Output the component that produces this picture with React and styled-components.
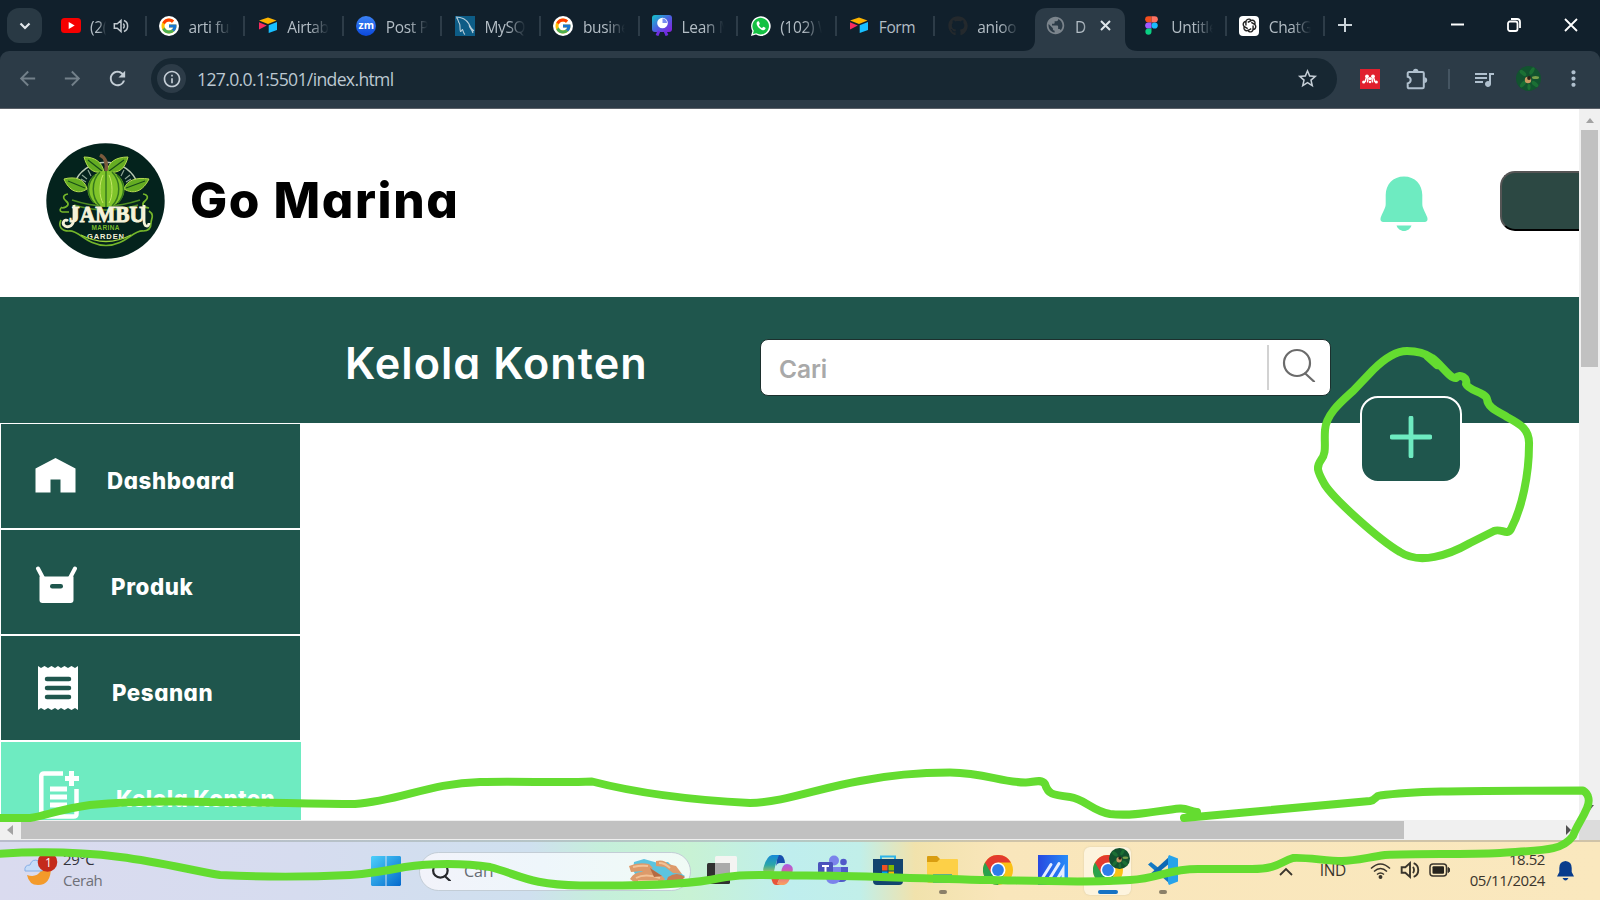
import React from "react";
import styled, { createGlobalStyle, css } from "styled-components";
import { FcGoogle } from "react-icons/fc";
import { FaGithub, FaWhatsapp } from "react-icons/fa";
import { RiOpenaiLine } from "react-icons/ri";
import {
  MdArrowBack, MdArrowForward, MdRefresh, MdInfoOutline, MdStarBorder,
  MdQueueMusic, MdMoreVert, MdPublic,
} from "react-icons/md";

const GlobalStyle = createGlobalStyle`
  * { box-sizing: border-box; }
  body { margin: 0; overflow: hidden; }
  svg { display: block; flex: none; }
`;

const ui = css`font-family: "Open Sans", "Noto Sans", sans-serif;`;
const brandFont = css`
  font-family: Inter, "Liberation Sans", sans-serif;
  font-feature-settings: "cv11", "ss03";
`;

const Screen = styled.div`
  position: relative;
  width: 1600px;
  height: 900px;
  display: flex;
  flex-direction: column;
  overflow: hidden;
  background: #fff;
  ${ui}
`;

/* ---------- browser chrome ---------- */
const TabStrip = styled.div`
  height: 51px;
  flex: none;
  display: flex;
  align-items: stretch;
  background: #11202c;
  padding-left: 7px;
`;
const TabMenu = styled.div`
  width: 35px;
  height: 35px;
  margin: 8px 6px 0 0;
  border-radius: 12px;
  background: #293944;
  display: flex;
  align-items: center;
  justify-content: center;
`;
const Tab = styled.div`
  position: relative;
  width: ${(p) => p.$width || 98.6}px;
  flex: none;
  height: 51px;
  display: flex;
  align-items: center;
  padding-left: ${(p) => (p.$active ? 12 : 12.5)}px;
  gap: ${(p) => (p.$active ? 9 : 9.5)}px;
  color: #b3bdc5;
`;
const ActiveShape = styled.svg`
  position: absolute;
  left: -11px;
  bottom: 0;
`;
const TabIcon = styled.div`
  position: relative;
  width: 20px;
  display: flex;
  justify-content: center;
`;
const TabText = styled.div`
  position: relative;
  width: ${(p) => p.$w || 42}px;
  margin-top: 2px;
  overflow: hidden;
  white-space: nowrap;
  font-size: 15.5px;
  letter-spacing: -0.35px;
  mask-image: ${(p) => (p.$full ? "none" : "linear-gradient(90deg, #000 55%, transparent 100%)")};
`;
const TabDivider = styled.div`
  width: 2px;
  height: 20px;
  margin-left: auto;
  background: #2d3c48;
`;
const TabButton = styled.div`
  position: relative;
  margin-left: ${(p) => p.$ml || 0}px;
  display: flex;
`;
const WindowButtons = styled.div`
  margin-left: auto;
  display: flex;
  align-items: center;
  gap: 43px;
  padding-right: 22px;
  height: 50px;
`;
const ToolbarBack = styled.div`
  background: #11202c;
  flex: none;
`;
const Toolbar = styled.div`
  height: 58px;
  display: flex;
  align-items: center;
  background: #2c3b47;
  border-radius: 9px 9px 0 0;
  border-bottom: 1px solid #5b6068;
  padding: 0 0 2px 16px;
`;
const NavButtons = styled.div`
  display: flex;
  gap: 22px;
  color: #73808a;
  width: 135px;
  flex: none;
`;
const AddressBar = styled.div`
  width: 1186px;
  flex: none;
  height: 42px;
  border-radius: 21px;
  background: #172732;
  display: flex;
  align-items: center;
  padding: 0 18px 0 6px;
  color: #c5ced6;
`;
const InfoBadge = styled.div`
  width: 29px;
  height: 29px;
  border-radius: 50%;
  background: #2c3b47;
  display: flex;
  align-items: center;
  justify-content: center;
  margin-right: 11px;
`;
const Url = styled.div`
  flex: 1;
  font-size: 17.6px;
  letter-spacing: -0.66px;
  color: #bcc8d1;
`;
const Extensions = styled.div`
  display: flex;
  align-items: center;
  flex: none;
  margin-left: 23px;
  color: #b0c0ce;
`;
const ExtensionDivider = styled.div`
  width: 2px;
  height: 20px;
  margin: 0 22px 0 20px;
  background: #455562;
`;

/* ---------- page ---------- */
const Viewport = styled.div`
  height: 711px;
  flex: none;
  display: flex;
`;
const Page = styled.div`
  position: relative;
  width: 1579px;
  height: 711px;
  overflow: hidden;
`;
const Header = styled.header`
  height: 188px;
  display: flex;
  align-items: center;
  padding: 0 0 4px 46px;
`;
const Brand = styled.h1`
  ${brandFont}
  margin: 0 0 2px 25px;
  width: 1190px;
  flex: none;
  white-space: nowrap;
  font-size: 49.5px;
  line-height: 60px;
  font-weight: 800;
  letter-spacing: 1.6px;
  color: #000;
`;
const HeaderButton = styled.div`
  width: 140px;
  height: 60px;
  flex: none;
  margin: 0 0 0 72px;
  background: #2c4843;
  border: 2px solid;
  border-color: #555 #000 #000 #555;
  border-radius: 15px;
`;
const Band = styled.div`
  height: 126px;
  background: #1f564d;
  display: flex;
  align-items: center;
  padding-left: 345px;
`;
const BandTitle = styled.h2`
  ${brandFont}
  margin: 5px 0 0;
  width: 415px;
  font-size: 43.2px;
  font-weight: 600;
  letter-spacing: 1.05px;
  white-space: nowrap;
  color: #fff;
`;
const SearchBox = styled.div`
  width: 571px;
  height: 57px;
  margin-top: 15px;
  background: #fff;
  border: 1px solid #1c302e;
  border-radius: 8px;
  display: flex;
  align-items: center;
  padding-left: 18px;
`;
const SearchHint = styled.span`
  font-family: Inter, sans-serif;
  font-size: 24.5px;
  font-weight: 600;
  letter-spacing: -0.1px;
  color: #a9a9a9;
  padding-top: 3px;
  width: 488px;
`;
const SearchRule = styled.div`
  width: 2px;
  height: 45px;
  background: #d2d2d2;
  margin-right: 13px;
`;
const SearchIcon = styled.div`
  padding-bottom: 5px;
`;
const AddButton = styled.div`
  position: absolute;
  left: 1360px;
  top: 287px;
  width: 102px;
  height: 87px;
  border: 2.5px solid #fff;
  border-radius: 18px;
  background: #1f564d;
  display: flex;
  align-items: center;
  justify-content: center;
  padding-bottom: 5px;
`;
const Sidebar = styled.nav`
  display: flex;
  flex-direction: column;
  gap: 2px;
  width: 301px;
  padding: 1px 0 0 1px;
`;
const SideItem = styled.div`
  ${brandFont}
  height: 104.1px;
  flex: none;
  width: ${(p) => (p.$active ? 300 : 299)}px;
  background: ${(p) => (p.$active ? "#6eebc1" : "#1f564d")};
  display: flex;
  align-items: center;
  color: #fff;
  font-size: 22.3px;
  font-weight: 800;
  letter-spacing: ${(p) => p.$ls || 0}px;
  padding-left: 34px;
`;
const SideIcon = styled.div`
  width: ${(p) => p.$w}px;
  margin-top: ${(p) => p.$mt || 0}px;
  padding-left: ${(p) => p.$pl || 0}px;
`;
const SideLabel = styled.span`
  margin-top: 8px;
  white-space: nowrap;
`;

const VScroll = styled.div`
  width: 21px;
  height: 711px;
  background: #f0f0f0;
  display: flex;
  flex-direction: column;
  align-items: center;
  padding: 6px 0 7px;
`;
const VThumb = styled.div`
  width: 17px;
  height: 237px;
  margin: 5px 0 auto;
  background: #c1c1c1;
`;
const HScroll = styled.div`
  height: 20px;
  flex: none;
  display: flex;
  align-items: center;
  background: #f0f0f0;
  padding-left: 7px;
`;
const HThumb = styled.div`
  width: 1383px;
  height: 18px;
  margin: 0 auto 0 6px;
  background: #c1c1c1;
`;
const ScrollCorner = styled.div`
  width: 21px;
  height: 20px;
  margin-left: 5px;
  background: #dcdcdc;
`;

/* ---------- taskbar ---------- */
const Taskbar = styled.footer`
  height: 60px;
  flex: none;
  display: flex;
  align-items: center;
  border-top: 2px solid #b9babd;
  border-image: linear-gradient(90deg, #b9bccb, #b4c8c4 50%, #cfc3a8 62%) 1;
  background: linear-gradient(90deg, #dadbef 0, #d6dcef 300px, #cfe0ef 530px, #c5efdb 600px, #c8f2d4 690px, #bfeeee 790px, #c1efe9 860px, #f1e2ac 915px, #f9e6bb 1000px, #fae8be 100%);
`;
const Weather = styled.div`
  display: flex;
  width: 371px;
  padding-left: 24px;
  gap: 5px;
`;
const TwoLines = styled.div`
  margin-top: -3px;
  font-size: 15px;
  line-height: 20.5px;
  letter-spacing: -0.43px;
  color: ${(p) => p.$c || "#33343c"};
  text-align: ${(p) => p.$align || "left"};
  span { display: block; }
  span + span { color: ${(p) => p.$c2 || p.$c}; }
`;
const TaskSearch = styled.div`
  width: 272px;
  height: 39px;
  margin-left: 18px;
  border-radius: 20px;
  border: 1px solid #c3cdd6;
  background: linear-gradient(90deg, #f2f3fa, #eef6fb 45%, #f0fbf5);
  display: flex;
  align-items: center;
  padding: 0 4px 0 12px;
  gap: 13px;
  color: #666b73;
  font-size: 16px;
`;
const TaskSearchText = styled.span`
  flex: 1;
`;
const Apps = styled.div`
  display: flex;
  align-items: center;
  margin-left: 8px;
`;
const AppSlot = styled.div`
  width: ${(p) => p.$w || 55}px;
  height: 58px;
  display: flex;
  flex-direction: column;
  align-items: center;
  padding-top: 13px;
`;
const AppTile = styled.div`
  width: 47px;
  height: 48px;
  margin: -8px 0 -5px;
  padding-top: 8px;
  border-radius: 6px;
  background: #fdf4de;
  box-shadow: 0 0 2px #d8cba8;
  display: flex;
  flex-direction: column;
  align-items: center;
`;
const Running = styled.div`
  width: ${(p) => (p.$on ? 20 : 8)}px;
  height: 4px;
  flex: none;
  margin-top: 5px;
  border-radius: 2px;
  background: ${(p) => (p.$on ? "#1673c4" : "#8b8068")};
`;
const Tray = styled.div`
  margin-left: auto;
  display: flex;
  align-items: center;
  padding-right: 26px;
  color: #3a352c;
  font-size: 15.5px;
`;
const Lang = styled.span`
  margin: -2px 23px 0 27px;
  letter-spacing: -0.3px;
  width: 27px;
`;
const TrayIcons = styled.div`
  display: flex;
  align-items: center;
  gap: 9px;
  margin: -2px 20px 0 0;
`;
const Annotation = styled.svg`
  position: absolute;
  left: 0;
  top: 0;
  pointer-events: none;
`;

/* ---------- icons ---------- */
const YouTube = () => (
  <svg width="20" height="15" viewBox="0 0 20 15"><rect width="20" height="15" rx="3.5" fill="#f60000" /><path d="M7.7 4v7l6-3.5z" fill="#fff" /></svg>
);
const GoogleBadge = styled.div`
  width: 20px;
  height: 20px;
  border-radius: 50%;
  background: #fff;
  display: flex;
  align-items: center;
  justify-content: center;
`;
const Google = () => <GoogleBadge><FcGoogle size={18} /></GoogleBadge>;
const Airtable = () => (
  <svg width="20" height="17" viewBox="0 0 20 17">
    <path d="M1 3.6 10 .5l8.500 3.100L10 7z" fill="#fcb400" />
    <path d="M10.700 8.300 19 5v8L10.700 16z" fill="#18bfff" />
    <path d="M1 5.200 8.800 8.500 1 12.500z" fill="#f82b60" />
  </svg>
);
const ZoomBadge = styled.div`
  width: 20px;
  height: 20px;
  border-radius: 50%;
  background: linear-gradient(#3b82f6, #0b48dc);
  color: #fff;
  font: 700 10.5px/18px "Open Sans", sans-serif;
  text-align: center;
`;
const MySql = () => (
  <svg width="20" height="20" viewBox="0 0 20 20">
    <rect width="20" height="20" fill="#0d5c86" />
    <path d="M1 1c6 0 10 2 13 7 1 2 1 4 5 7M1.500 1.500c2 2 1.500 4 3 6 1 2 0 5 1 8 1 0 1.500-2 2-2 1 2 1 4 2.500 5M14 8c0 4 3 5 4 9" fill="none" stroke="#b7cdd9" strokeWidth="1.100" />
  </svg>
);
const Lean = () => (
  <svg width="20" height="21" viewBox="0 0 20 21">
    <defs><linearGradient id="lean" x1="0" y1="0" x2="1" y2="1"><stop offset="0" stopColor="#12c8c8" /><stop offset=".5" stopColor="#4a62e0" /><stop offset="1" stopColor="#8a1ce0" /></linearGradient></defs>
    <rect width="20" height="17" rx="3" fill="url(#lean)" />
    <path d="m7 16-2 4.500M13 16l2 4.500" stroke="#6f2ee0" strokeWidth="3" />
    <circle cx="10.500" cy="8" r="5.300" fill="#fff" /><path d="M10.500 8V3.500A4.500 4.500 0 0 1 15 8z" fill="#7a8df0" />
  </svg>
);
const WhatsApp = () => (
  <svg width="20" height="20" viewBox="0 0 20 20">
    <path d="M0 20 1.400 15A9.800 9.800 0 1 1 5 18.600z" fill="#fff" />
    <path d="M1.900 18.100 2.800 14.800A8.300 8.300 0 1 1 5.300 17.200z" fill="#14c143" />
    <path d="M7.200 5.200c-.6 0-1.600.7-1.600 2.300 0 2.600 3.600 6.300 6.300 6.700 1.600.2 2.700-.9 2.700-2.200 0-.4-2-1.400-2.300-1.300-.4.100-.9 1.200-1.300 1.200-.8-.1-2.700-1.700-3-2.700 0-.4.800-.9.800-1.400 0-.4-.8-2.500-1.100-2.600z" fill="#fff" />
  </svg>
);
const GithubBox = styled.div`color: #24292d;`;
const GlobeBox = styled.div`color: #7b848c;`;
const Figma = () => (
  <svg width="13" height="19" viewBox="0 0 14 20">
    <path d="M7 0H3.500a3.300 3.300 0 0 0 0 6.660H7z" fill="#f24e1e" /><path d="M7 0h3.500a3.300 3.300 0 0 1 0 6.660H7z" fill="#ff7262" />
    <path d="M7 6.660H3.500a3.300 3.300 0 0 0 0 6.660H7z" fill="#a259ff" /><circle cx="10.400" cy="10" r="3.330" fill="#1abcfe" />
    <path d="M7 13.320H3.500A3.300 3.300 0 1 0 7 16.700z" fill="#0acf83" />
  </svg>
);
const GptBadge = styled.div`
  width: 20px;
  height: 20px;
  border-radius: 4px;
  background: #fff;
  color: #222;
  display: flex;
  align-items: center;
  justify-content: center;
`;
const Speaker = ({ size = 16, color = "#c0c8ce" }) => (
  <svg width={size} height={size} viewBox="0 0 18 18" fill="none" stroke={color} strokeWidth="1.700">
    <path d="M1.500 6.500h3.300L9 2.800v12.400L4.800 11.500H1.500zM11.500 6.300c1.500 1 1.500 4.400 0 5.400M12.300 2.800c5.500 2 5.500 10.400 0 12.400" />
  </svg>
);
const Mendeley = () => (
  <svg width="20" height="20" viewBox="0 0 20 20">
    <rect width="20" height="20" fill="#e0202e" />
    <g fill="#fff"><circle cx="7" cy="7.300" r="1.900" /><circle cx="13" cy="7.300" r="1.900" /><circle cx="10" cy="9.600" r="1.600" /><circle cx="3.700" cy="13" r="1.600" /><circle cx="10" cy="13" r="1.200" /><circle cx="16.300" cy="13" r="1.600" /></g>
    <path d="M5 12.800C6 11 5.500 9 7 8M8 9l-.5 4.500M15 12.800C14 11 14.500 9 13 8M12 9l.5 4.500" stroke="#fff" strokeWidth="1.500" fill="none" />
  </svg>
);
const Puzzle = () => (
  <svg width="22" height="22" viewBox="0 0 22 22">
    <path d="M3 4h13.500a1.300 1.300 0 0 1 1.300 1.300V19a1.300 1.300 0 0 1-1.300 1.300H3A1.300 1.300 0 0 1 1.700 19v-3.600c4-1 4-5.600 0-6.600V5.300A1.300 1.300 0 0 1 3 4z" fill="none" stroke="currentColor" strokeWidth="2" />
    <path d="M7 3.500a2.700 2.700 0 0 1 5.400 0zM18.300 9.200a2.900 2.900 0 0 1 0 5.800z" fill="currentColor" />
  </svg>
);
const Avatar = ({ size }) => (
  <svg width={size} height={size} viewBox="0 0 25 25">
    <circle cx="12.500" cy="12.500" r="12.500" fill="#12532f" />
    <g fill="#1f7a36" opacity=".75"><ellipse cx="7" cy="7" rx="4" ry="2" transform="rotate(40 7 7)" /><ellipse cx="16" cy="5" rx="4" ry="1.800" transform="rotate(-60 16 5)" /><ellipse cx="19" cy="18" rx="4" ry="2" transform="rotate(40 19 18)" /><ellipse cx="7" cy="18" rx="4" ry="2" transform="rotate(-50 7 18)" /><ellipse cx="13" cy="21" rx="1.600" ry="3" /></g>
    <ellipse cx="19.500" cy="11.500" rx="3.500" ry="1.500" fill="#79a14a" /><circle cx="12" cy="14" r="3.200" fill="#c99b62" /><circle cx="13" cy="12" r="1.900" fill="#2a1f18" />
  </svg>
);
const Magnifier = ({ size, stroke, color }) => (
  <svg width={size} height={size} viewBox="0 0 34 34" fill="none" stroke={color} strokeWidth={stroke} strokeLinecap="round">
    <circle cx="15" cy="15" r="13" /><path d="m23.300 25.500 8.700 8" />
  </svg>
);
const BellBox = styled.div`
  padding-top: 5px;
`;
const Bell = () => (
  <svg width="48" height="56" viewBox="0 0 48 56" fill="#6eebc1">
    <path d="M24 .5C13 .5 5.700 8.500 5.700 19v9c0 4-2.500 7-5 13.500C0 43.800.7 46 3 46h42c2.300 0 3-2.200 2.300-4.500C44.800 35 42.300 32 42.300 28v-9C42.300 8.500 35 .5 24 .5z" />
    <path d="M16.500 49.500h15c-1 3-4 5.500-7.500 5.500s-6.500-2.500-7.500-5.500z" />
  </svg>
);
const Logo = () => (
  <svg width="119" height="116" viewBox="0 0 119 116">
    <ellipse cx="59.500" cy="58" rx="59.200" ry="57.800" fill="#04231d" />
    <path d="M28 42a33 30 0 0 1 64 0" fill="none" stroke="#b9c9b4" strokeWidth="1.500" />
    <path d="M36 32l5 4M35 36l5 3M42 27l3 6M84 32l-5 4M85 36l-5 3M78 27l-3 6" stroke="#8ba494" strokeWidth="1.200" />
    <path d="M22 51c-6 1-5 5-2 7 4 3 2 6-4 7M97 51c6 1 5 5 2 7-4 3-2 6 4 7M16 69h7M16 64c-2 2-3 4 0 5M103 68c6 4 2 8 2 12 0 5-3 8-8 8-10-1-18 14.500-37 14.500S33 87 23 88c-8 0-11-5-8-11" fill="none" stroke="#74b62a" strokeWidth="1.700" />
    <path d="M26 57q18 6 34 6t34-6M28 62q16 5 32 5t32-5" fill="none" stroke="#4e8d22" strokeWidth="1.500" />
    <g fill="#65ad22" stroke="#b3dc50" strokeWidth="1">
      <path d="M58 29C45 31 41 24 38 14c11 0 18 5 20 15z" /><path d="M61 29c1-10 9-15 21-15-3 11-8 17-21 15z" />
      <path d="M41 46c-9 6-18 2-23-10 11-3 21 0 23 10z" /><path d="M78 46c3-9 12-12 25-10-6 12-15 16-25 10z" />
    </g>
    <path d="M42 17l14 11M78 17 63 28M22 38l17 7M99 38l-19 7" stroke="#174d18" strokeWidth="1.200" />
    <path d="M60 28c1-8 0-13-6-16" fill="none" stroke="#7b5a3d" strokeWidth="3.500" />
    <ellipse cx="60" cy="46" rx="18.500" ry="18" fill="#80c42a" />
    <path d="M60 28v36M54 29c-9 9-9 25 0 34M66 29c9 9 9 25 0 34M49 32c-9 9-8 20-1 28M71 32c9 9 8 20 1 28" fill="none" stroke="#35781c" strokeWidth="1.500" />
    <path d="M57 32c-4 8-4 22 0 28M63 32c4 8 4 22 0 28" fill="none" stroke="#c5e866" strokeWidth="1" />
    <text x="61" y="79" textAnchor="middle" textLength="76" lengthAdjust="spacingAndGlyphs" fontFamily="Liberation Serif, serif" fontWeight="700" fontSize="24" fill="#f5f2d8" stroke="#f5f2d8" strokeWidth="1">JAMBU</text>
    <path d="M28 62v12c0 9-5 11-9 9-4-3 0-8 3-5M98 62v15c0 8 5 7 5 3" fill="none" stroke="#f5f2d8" strokeWidth="2.800" />
    <text x="59.500" y="87" textAnchor="middle" textLength="28" fontFamily="Liberation Sans, sans-serif" fontWeight="700" fontSize="6.500" fill="#78b92b">MARINA</text>
    <text x="59.500" y="95.500" textAnchor="middle" textLength="37" fontFamily="Liberation Sans, sans-serif" fontWeight="700" fontSize="7.500" fill="#f5f2d8">GARDEN</text>
    <path d="M35 92q25 13 50 0" fill="none" stroke="#9bd23a" strokeWidth="1.300" />
  </svg>
);
const Home = () => (
  <svg width="41" height="35" viewBox="0 0 41 35"><path d="M20.500 0 40.500 10.500V34.500H25.500V21.500H15.500V34.500H.5V10.500z" fill="#fff" /></svg>
);
const Box = () => (
  <svg width="43" height="37" viewBox="0 0 43 37"><path d="M3 2.500 8 12M40 2.500 35 12" stroke="#fff" strokeWidth="4" strokeLinecap="round" /><path d="M4.500 10.500h34V34q0 3-3 3h-28q-3 0-3-3z" fill="#fff" /><rect x="15" y="18" width="13" height="4.500" rx="2.200" fill="#1f564d" /></svg>
);
const Receipt = () => (
  <svg width="40" height="44" viewBox="0 0 40 44">
    <path d="M0 0l3 2 3.500-2L10 2l3.500-2L17 2l3-2 3 2 3.500-2L30 2l3.500-2L37 2l3-2v44l-3-2-3.500 2L30 42l-3.500 2L23 42l-3 2-3-2-3.500 2L10 42l-3.500 2L3 42l-3 2z" fill="#fff" />
    <path d="M9 13h22M9 22h22M9 31h22" stroke="#1f564d" strokeWidth="4.500" strokeLinecap="round" />
  </svg>
);
const PagePlus = () => (
  <svg width="40" height="48" viewBox="0 0 40 48" fill="none" stroke="#fff" strokeWidth="4.500">
    <path d="M24 2.500H5Q2.300 2.500 2.300 5v38q0 2.500 2.700 2.500h29.500q3 0 3-2.500V18" /><path d="M32.500 0v15M26 7.500h14M11 18h17M11 26h17M11 34h17" strokeWidth="5" />
  </svg>
);
const Arrow = ({ d, c = "#a3a3a3" }) => <svg width="8" height="10" viewBox="0 0 8 10"><path d={d} fill={c} /></svg>;
const Moon = () => (
  <svg width="34" height="38" viewBox="0 0 34 38">
    <path d="M20 5q6 2 7 10Q27 33 14 33 5 33 3 23q16 5 17-18z" fill="#f39a2b" />
    <path d="M1 19q-1-6 5-6 2-7 9-4 5 2 4 9 0 1-2 1z" fill="#c6dcf8" stroke="#86afe6" />
    <circle cx="23.500" cy="10" r="9.800" fill="#c42b1c" />
    <text x="24.500" y="14.500" textAnchor="middle" fill="#fff" fontSize="12" fontFamily="Open Sans, sans-serif">1</text>
  </svg>
);
const Windows = () => (
  <svg width="30" height="30" viewBox="0 0 30 30"><defs><linearGradient id="win" x1="0" y1="0" x2="1" y2="1"><stop stopColor="#4dd0fb" /><stop offset="1" stopColor="#0469cc" /></linearGradient></defs><path d="M1 0h13.500v14.500H0V1zM15.500 0H29l1 1v13.500H15.500zM0 15.500h14.500V30H1l-1-1zM15.500 15.500H30V29l-1 1H15.500z" fill="url(#win)" /></svg>
);
const Canyon = () => (
  <svg width="58" height="26" viewBox="0 0 58 26">
    <path d="M6 4 16 1l14 4 10-1 9 9 8 5-8 6-20-2-20-2-4-8z" fill="#5cc4df" />
    <path d="M1 8q9-4 20-2l4 4-10 3-12 1zM28 3q8-2 12 3l8 2 6 8-9-1-8-6-9-1zM2 21q3-6 11-7l9-4 12 8 3 3-3 3H6z" fill="#dd9a6a" />
    <path d="M5 9q8-2 15-1M8 20q9-5 24 0M31 5q6 0 11 5M10 23h20" stroke="#f2c296" strokeWidth="2" fill="none" /><path d="M40 19q9-6 17 0l-5 5H38z" fill="#c97c51" />
    <path d="M22 10l12 8-8 1z" fill="#b46a43" />
  </svg>
);
const TaskView = () => (
  <svg width="30" height="30" viewBox="0 0 30 30"><rect x="8" y="1" width="22" height="20" rx="1.500" fill="#f4f4f2" /><rect y="8" width="23" height="21" rx="1.500" fill="#303030" /><path d="M8 8h15v13H8z" fill="#aaa" /></svg>
);
const Copilot = () => (
  <svg width="30" height="30" viewBox="0 0 30 30">
    <defs>
      <linearGradient id="cpa" x1="0" y1="0" x2="0" y2="1"><stop stopColor="#1689d8" /><stop offset=".5" stopColor="#2ca6a8" /><stop offset="1" stopColor="#c9cf3c" /></linearGradient>
      <linearGradient id="cpb" x1="0" y1="0" x2="0" y2="1"><stop stopColor="#a85be8" /><stop offset=".5" stopColor="#e2608f" /><stop offset="1" stopColor="#fba45c" /></linearGradient>
    </defs>
    <path d="M9 0h8q-3 3-5 12-1 8-6 8-8-1-5-9Q4 1 9 0z" fill="url(#cpa)" />
    <path d="M13 0h4q4 0 5 8h-5q-3 0-4 3 0-6 3-11z" fill="#174fae" />
    <path d="M21 30h-8q3-3 5-12 1-9 6-9 8 1 5 9-3 11-8 12z" fill="url(#cpb)" />
    <path d="M17 30h-4q-4 0-5-9h5q3 0 4-3 0 6-3 11z" fill="#e8543a" />
  </svg>
);
const Teams = () => (
  <svg width="30" height="30" viewBox="0 0 30 30"><circle cx="16" cy="5.500" r="5" fill="#7b83eb" /><circle cx="25.500" cy="7" r="3.300" fill="#5059c9" /><path d="M20 12h10v9q-1 6-6 6h-4z" fill="#5059c9" /><path d="M8 12h15v10q-1 7-8 7t-7-7z" fill="#7b83eb" /><rect y="7" width="15" height="15" rx="1.500" fill="#4b53bc" /><path d="M4 11h7M7.500 11v8" stroke="#fff" strokeWidth="2" /></svg>
);
const Store = () => (
  <svg width="30" height="30" viewBox="0 0 30 30"><path d="M8 6V1.500h14V6" fill="none" stroke="#2fb4e8" strokeWidth="2" /><path d="M0 4h30v22q0 4-4 4H4q-4 0-4-4z" fill="#12446f" /><path d="M9 10h5.500v5.500H9z" fill="#f25022" /><path d="M15.500 10H21v5.500h-5.500z" fill="#7fba00" /><path d="M9 16.500h5.500V22H9z" fill="#00a4ef" /><path d="M15.500 16.500H21V22h-5.500z" fill="#ffb900" /></svg>
);
const Folder = () => (
  <svg width="31" height="30" viewBox="0 0 31 30"><path d="M0 2q0-1 1-1h9l3 3v6H0z" fill="#d99d10" /><path d="M0 7h10l3-3h17q1 0 1 1v21q0 2-2 2H2q-2 0-2-2z" fill="#fdd047" /><path d="M6 19h19v9H6z" fill="#5fae8e" /></svg>
);
const Chrome = () => (
  <svg width="30" height="30" viewBox="0 0 30 30"><circle cx="15" cy="15" r="15" fill="#fbc116" /><path d="M2 7.500A15 15 0 0 0 15 30l6.500-11.300L15 15z" fill="#2ba24c" /><path d="M2 7.500 8.500 18.700 15 7.500h13A15 15 0 0 0 2 7.500z" fill="#e33b2e" /><circle cx="15" cy="15" r="7.500" fill="#fff" /><circle cx="15" cy="15" r="5.900" fill="#2f7de9" /></svg>
);
const MyAsus = () => (
  <svg width="30" height="30" viewBox="0 0 30 30"><defs><linearGradient id="asus"><stop stopColor="#2749e0" /><stop offset="1" stopColor="#268cf8" /></linearGradient></defs><rect width="30" height="30" fill="url(#asus)" /><path d="M4.500 23 13 9.500M12 23 21 8.500M20 23l5-8.500V24" fill="none" stroke="#e4edff" strokeWidth="3" strokeLinecap="round" /></svg>
);
const ChromeBadge = styled.div`
  position: relative;
  display: flex;
`;
const BadgeAvatar = styled.div`
  position: absolute;
  left: 16px;
  top: -7px;
`;
const Code = () => (
  <svg width="30" height="30" viewBox="0 0 30 30"><path d="M0 9.500 3 7l19 15v7z" fill="#1379c4" /><path d="M0 21l3 2.500L22 8V1z" fill="#0c68b4" /><path d="M21 0l9 3.500v23L21 30l-1-2V2z" fill="#27a3ea" /></svg>
);
const Wifi = () => (
  <svg width="21" height="17" viewBox="0 0 21 17" fill="none" stroke="#3a352c" strokeWidth="1.500"><path d="M1 6.500q9.500-9 19 0M4 9.500q6.500-6 13 0M7 12.500q3.500-3 7 0" /><circle cx="10.500" cy="15" r="1.200" fill="#3a352c" /></svg>
);
const Battery = () => (
  <svg width="21" height="14" viewBox="0 0 21 14"><rect x="1" y="1" width="16.500" height="12" rx="3" fill="none" stroke="#3a352c" strokeWidth="1.500" /><rect x="3.500" y="3.300" width="11.500" height="7.400" rx="1" fill="#26231d" /><path d="M19 4.500v5l1.500-1v-3z" fill="#3a352c" stroke="#3a352c" /></svg>
);
const TrayBell = () => (
  <svg width="17" height="20" viewBox="0 0 17 20" fill="#093c8c"><path d="M8.500 0Q2.300.5 2.300 7v4L0 15.500h17L14.700 11V7Q14.700.5 8.500 0zM5.500 17h6q-3 5-6 0z" /></svg>
);

const tabs = [
  { icon: <YouTube />, label: "(2(", w: 16, audio: true },
  { icon: <Google />, label: "arti fun" },
  { icon: <Airtable />, label: "Airtab" },
  { icon: <ZoomBadge>zm</ZoomBadge>, label: "Post Pr" },
  { icon: <MySql />, label: "MySQ" },
  { icon: <Google />, label: "busine" },
  { icon: <Lean />, label: "Lean M" },
  { icon: <WhatsApp />, label: "(102) W" },
  { icon: <Airtable />, label: "Form", full: true },
  { icon: <GithubBox><FaGithub size={20} /></GithubBox>, label: "anioo", noDivider: true },
  { icon: <GlobeBox><MdPublic size={21} /></GlobeBox>, label: "D", active: true, w: 15, noDivider: true, width: 95.4 },
  { icon: <Figma />, label: "Untitle", width: 97.4 },
  { icon: <GptBadge><RiOpenaiLine size={17} /></GptBadge>, label: "ChatG", width: 98 },
];

const menu = [
  { icon: <Home />, label: "Dashboard", w: 72, mt: -1, ls: 0.6 },
  { icon: <Box />, label: "Produk", w: 76, mt: 4, ls: 0.6 },
  { icon: <Receipt />, label: "Pesanan", w: 77, pl: 3, ls: 0.55 },
  { icon: <PagePlus />, label: "Kelola Konten", w: 81, mt: 1, pl: 4, ls: 0.4, active: true },
];

export default function App() {
  return (
    <Screen>
      <GlobalStyle />
      <TabStrip>
        <TabMenu>
          <svg width="12" height="8" viewBox="0 0 12 8"><path d="m1.500 1.500 4.500 4.500 4.500-4.500" fill="none" stroke="#e3e8ec" strokeWidth="2.200" /></svg>
        </TabMenu>
        {tabs.map((t, i) => (
          <Tab key={i} $active={t.active} $width={t.width}>
            {t.active && (
              <ActiveShape width="116" height="43" viewBox="0 0 116 43">
                <path d="M0 43q12 0 12-12V12Q12 0 24 0h66q12 0 12 12v19q0 12 13 12z" fill="#2c3b47" />
              </ActiveShape>
            )}
            <TabIcon>{t.icon}</TabIcon>
            <TabText $w={t.w} $full={t.full}>{t.label}</TabText>
            {t.audio && <TabButton $ml={-3}><Speaker /></TabButton>}
            {t.active && (
              <TabButton $ml={1}>
                <svg width="11" height="11" viewBox="0 0 11 11"><path d="m1 1 9 9M10 1 1 10" stroke="#dfe5e9" strokeWidth="2" /></svg>
              </TabButton>
            )}
            {!t.noDivider && <TabDivider />}
          </Tab>
        ))}
        <TabButton $ml={13}>
          <svg width="14" height="50" viewBox="0 0 14 50"><path d="M7 18v14M0 25h14" stroke="#cbd4da" strokeWidth="2" /></svg>
        </TabButton>
        <WindowButtons>
          <svg width="13" height="14" viewBox="0 0 13 14"><path d="M0 6.500h13" stroke="#fff" strokeWidth="2" /></svg>
          <svg width="14" height="14" viewBox="0 0 14 14" fill="none" stroke="#fff" strokeWidth="1.800"><rect x="1" y="3.500" width="9.500" height="9.500" rx="2" /><path d="M4 1h6q3 0 3 3v6" /></svg>
          <svg width="14" height="14" viewBox="0 0 14 14"><path d="m1 1 12 12M13 1 1 13" stroke="#fff" strokeWidth="1.800" /></svg>
        </WindowButtons>
      </TabStrip>
      <ToolbarBack>
        <Toolbar>
          <NavButtons>
            <MdArrowBack size={23} /><MdArrowForward size={23} /><MdRefresh size={23} color="#c3cdd5" />
          </NavButtons>
          <AddressBar>
            <InfoBadge><MdInfoOutline size={20} /></InfoBadge>
            <Url>127.0.0.1:5501/index.html</Url>
            <MdStarBorder size={23} />
          </AddressBar>
          <Extensions>
            <Mendeley />
            <TabButton $ml={26}><Puzzle /></TabButton>
            <ExtensionDivider />
            <MdQueueMusic size={24} />
            <TabButton $ml={20}><Avatar size={25} /></TabButton>
            <TabButton $ml={20}><MdMoreVert size={25} /></TabButton>
          </Extensions>
        </Toolbar>
      </ToolbarBack>
      <Viewport>
        <Page>
          <Header>
            <Logo />
            <Brand>Go Marina</Brand>
            <BellBox><Bell /></BellBox>
            <HeaderButton />
          </Header>
          <Band>
            <BandTitle>Kelola Konten</BandTitle>
            <SearchBox>
              <SearchHint>Cari</SearchHint>
              <SearchRule />
              <SearchIcon><Magnifier size={34} stroke={2.2} color="#6b6b6b" /></SearchIcon>
            </SearchBox>
          </Band>
          <Sidebar>
            {menu.map((m) => (
              <SideItem key={m.label} $active={m.active} $ls={m.ls}>
                <SideIcon $w={m.w} $mt={m.mt} $pl={m.pl}>{m.icon}</SideIcon>
                <SideLabel>{m.label}</SideLabel>
              </SideItem>
            ))}
          </Sidebar>
          <AddButton>
            <svg width="42" height="42" viewBox="0 0 42 42"><path d="M21 2v38M2 21h38" stroke="#6eebc1" strokeWidth="4.800" strokeLinecap="round" /></svg>
          </AddButton>
        </Page>
        <VScroll>
          <Arrow d="M0 8 4 3l4 5z" />
          <VThumb />
          <Arrow d="M0 2h8L4 7z" c="#555" />
        </VScroll>
      </Viewport>
      <HScroll>
        <Arrow d="M6 0v10L0 5z" />
        <HThumb />
        <Arrow d="M0 0v10l5-5z" c="#505050" />
        <ScrollCorner />
      </HScroll>
      <Taskbar>
        <Weather>
          <Moon />
          <TwoLines $c2="#6e7078"><span>29°C</span><span>Cerah</span></TwoLines>
        </Weather>
        <Windows />
        <TaskSearch>
          <Magnifier size={19} stroke={4} color="#26282c" />
          <TaskSearchText>Cari</TaskSearchText>
          <Canyon />
        </TaskSearch>
        <Apps>
          <AppSlot $w={46}><TaskView /></AppSlot>
          <AppSlot $w={65}><Copilot /></AppSlot>
          <AppSlot $w={45}><Teams /></AppSlot>
          <AppSlot $w={65}><Store /></AppSlot>
          <AppSlot $w={45}><Folder /><Running /></AppSlot>
          <AppSlot $w={65}><Chrome /></AppSlot>
          <AppSlot $w={45}><MyAsus /></AppSlot>
          <AppSlot $w={65}>
            <AppTile>
              <ChromeBadge><Chrome /><BadgeAvatar><Avatar size={21} /></BadgeAvatar></ChromeBadge>
              <Running $on />
            </AppTile>
          </AppSlot>
          <AppSlot $w={45}><Code /><Running /></AppSlot>
        </Apps>
        <Tray>
          <svg width="14" height="9" viewBox="0 0 14 9"><path d="m1 8 6-6 6 6" fill="none" stroke="#3a352c" strokeWidth="1.800" /></svg>
          <Lang>IND</Lang>
          <TrayIcons><Wifi /><Speaker size={20} color="#3a352c" /><Battery /></TrayIcons>
          <TwoLines $c="#3a352c" $align="right"><span>18.52</span><span>05/11/2024</span></TwoLines>
          <TabButton $ml={12}><TrayBell /></TabButton>
        </Tray>
      </Taskbar>
      <Annotation width="1600" height="900" viewBox="0 0 1600 900" fill="none" stroke="#64dc30" strokeWidth="8" strokeLinecap="round" strokeLinejoin="round">
        <path d="M1407 351C1396 351 1383 360 1373 370L1353 391C1342 401 1326 414 1325 430C1324 445 1327 452 1321 460C1316 467 1317 471 1325 485C1335 500 1378 539 1400 552C1420 565 1449 555 1470 543L1494 531C1501 528 1507 536 1511 529C1522 508 1529 475 1529 445C1530 429 1520 424 1507 417C1497 411 1488 408 1487 399C1485 392 1469 391 1466 384C1468 378 1460 373 1456 378C1450 379 1440 363 1432 358C1425 353 1418 351 1407 351zM1427 356L1437 365" />
        <path d="M-5 818H30C45 816 60 809 90 805C130 801 170 801 210 802C260 802 310 804 355 804C400 801 430 783 480 782C520 781 560 783 592 781.500C625 790 670 799 750 803C785 802 815 789 860 781C890 775 920 772.500 950 772.500C985 773 1000 782 1025 782.500C1032 783 1041 778 1045 784C1048 794 1052 795 1070 797C1085 799 1092 811 1110 814C1135 817 1160 810 1180 808.500C1188 808 1190 812 1197 812M1184 818L1370 801C1376 800 1375 796 1380 795.500C1420 790 1480 791 1583 790.500C1589 794 1590 801 1587 808C1582 820 1577 825 1573 836C1562 851 1545 850 1500 853C1460 855 1420 853 1385 855C1365 858 1355 861 1342 861C1327 861 1305 857 1293 858C1280 862 1278 869 1252 869H1198C1168 869 1160 878 1130 880C1090 883 1040 881 990 880C900 878 840 875 800 875.500C760 875 740 874 720 878C690 885 630 886 580 885.500C530 885 520 875 490 867C465 863 430 863 405 867C380 872 365 874 350 875C310 877 260 877 220 875C190 870 160 862 120 857C80 852 40 851 -5 854" />
      </Annotation>
    </Screen>
  );
}
